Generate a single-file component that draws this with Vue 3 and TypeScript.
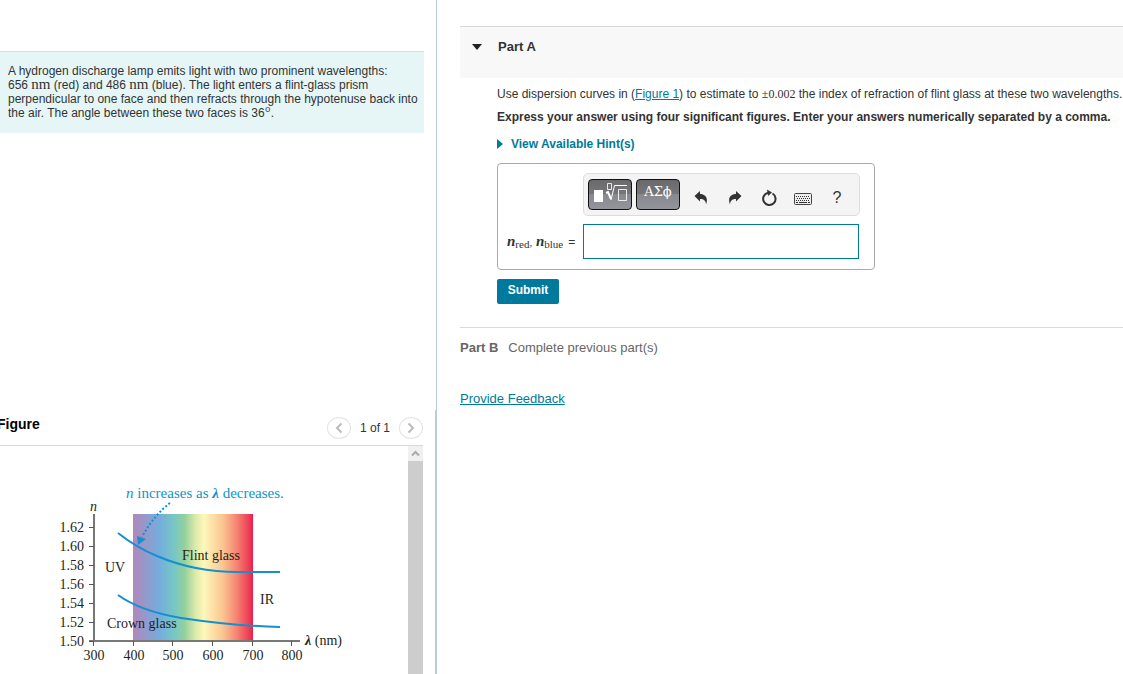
<script setup lang="ts">
import { ref } from 'vue'

const answer = ref('')

interface Tick {
  at: number
  label: string
}

const yTicks: Tick[] = ['1.62', '1.60', '1.58', '1.56', '1.54', '1.52', '1.50'].map(
  (label, i) => ({ label, at: 81 + i * 19 }),
)
const xTicks: Tick[] = [
  { label: '300', at: 93 },
  { label: '400', at: 133 },
  { label: '500', at: 172 },
  { label: '600', at: 212 },
  { label: '700', at: 252 },
  { label: '800', at: 291 },
]
</script>

<template>
  <div class="page">
    <aside class="side">
      <section class="intro">
        <p class="problem">
          A hydrogen discharge lamp emits light with two prominent wavelengths:<br />
          656 <span class="math">nm</span> (red) and 486 <span class="math">nm</span> (blue). The light
          enters a flint-glass prism<br />
          perpendicular to one face and then refracts through the hypotenuse back into<br />
          the air. The angle between these two faces is 36<span class="math">°</span>.
        </p>
      </section>
      <section class="figure">
        <header class="figure-head">
          <h2>Figure</h2>
          <nav class="pager" aria-label="Figures">
            <button type="button" aria-label="Previous figure">
              <svg width="10" height="12" viewBox="0 0 10 12"><path d="M7.500 1.500L3 6l4.500 4.500" /></svg>
            </button>
            <span>1 of 1</span>
            <button type="button" aria-label="Next figure">
              <svg width="10" height="12" viewBox="0 0 10 12"><path d="M2.500 1.500L7 6l-4.500 4.500" /></svg>
            </button>
          </nav>
        </header>
        <div class="figure-body">
          <svg class="plot" width="400" height="228" viewBox="0 0 400 228" role="img" aria-label="Dispersion curves">
            <defs>
              <linearGradient id="spectrum">
                <stop offset="0" stop-color="#b187bb" />
                <stop offset=".1" stop-color="#9698cb" />
                <stop offset=".22" stop-color="#74addd" />
                <stop offset=".35" stop-color="#78c8c2" />
                <stop offset=".43" stop-color="#94d09c" />
                <stop offset=".52" stop-color="#dbe9ab" />
                <stop offset=".59" stop-color="#fef7ba" />
                <stop offset=".75" stop-color="#fbc592" />
                <stop offset=".87" stop-color="#f58070" />
                <stop offset=".97" stop-color="#ef3a55" />
                <stop offset="1" stop-color="#e91e4d" />
              </linearGradient>
            </defs>
            <rect x="133" y="68" width="120" height="127" fill="url(#spectrum)" />
            <path class="axis" d="M94 68V195M89 195H300" />
            <path v-for="t in yTicks" :key="t.label" class="tick" :d="`M89 ${t.at + 0.5}h5`" />
            <path v-for="t in xTicks" :key="t.label" class="tick" :d="`M${t.at + 0.5} 195v5`" />
            <path class="curve" d="M118 87C132 98 142 104 157 110C185 122 210 126 238 126H280" />
            <path class="curve" d="M118 149C136 162 158 168 181 172C214 177 242 180 280 181" />
            <path class="dots" d="M170 57Q154 69 142 91" />
            <path class="head" d="M138 99L137 90L146 93Z" />
            <g class="labels">
              <text v-for="t in yTicks" :key="t.label" x="84" :y="t.at + 5" text-anchor="end">{{ t.label }}</text>
              <text v-for="t in xTicks" :key="t.label" :x="t.at + 1" y="214" text-anchor="middle">{{ t.label }}</text>
              <text x="90" y="65" font-style="italic">n</text>
              <text x="105" y="126">UV</text>
              <text x="260" y="158">IR</text>
              <text x="182" y="114">Flint glass</text>
              <text x="107" y="182">Crown glass</text>
              <text x="305" y="199"><tspan class="lambda">λ</tspan> (nm)</text>
              <text class="note" x="126" y="52"><tspan font-style="italic">n</tspan> increases as <tspan class="lambda">λ</tspan> decreases.</text>
            </g>
          </svg>
          <div class="track">
            <button type="button" aria-label="Scroll up">
              <svg width="9" height="7" viewBox="0 0 9 7"><path d="M1 5.500L4.500 2L8 5.500" /></svg>
            </button>
            <div class="thumb"></div>
          </div>
        </div>
      </section>
    </aside>

    <main class="main">
      <header class="part-head">
        <svg width="10" height="6" viewBox="0 0 10 6"><path d="M0 0H10L5 6Z" fill="#222" /></svg>
        <h1>Part A</h1>
      </header>
      <div class="part-body">
        <p>
          Use dispersion curves in (<a href="#">Figure 1</a>) to estimate to
          <span class="math value">±0.002</span> the index of refraction of flint glass at these two wavelengths.
        </p>
        <p class="strong">
          Express your answer using four significant figures. Enter your answers numerically separated by a comma.
        </p>
        <button type="button" class="hints">
          <svg width="6" height="10" viewBox="0 0 6 10"><path d="M0 0L6 5L0 10Z" fill="#007a9c" /></svg>
          View Available Hint(s)
        </button>
        <form class="answer" @submit.prevent>
          <div class="tools">
            <button type="button" class="dark" aria-label="Templates">
              <svg width="36" height="24" viewBox="0 0 36 24" fill="none" stroke="#fff">
                <rect x="2" y="7" width="9" height="12" fill="#fff" stroke="none" />
                <path d="M15.500 0.500h4v6h-4zM26.500 6.500h8v11h-8z" stroke-opacity=".85" />
                <path d="M14 10l2-1 3 7" stroke-width="2" />
                <path d="M19 17L22.500 2.500H35" />
              </svg>
            </button>
            <button type="button" class="dark greek">ΑΣϕ</button>
            <span class="plain">
              <button type="button" aria-label="Undo">
                <svg width="14" height="14" viewBox="0 0 14 14"><path d="M0.500 5L6 0V3C11.500 3 14.500 7 12 13.500C12 10 10 8 6 8V10.500Z" fill="#333" /></svg>
              </button>
              <button type="button" aria-label="Redo">
                <svg width="14" height="14" viewBox="0 0 14 14"><path d="M13.500 5L8 0V3C2.500 3 -0.500 7 2 13.500C2 10 4 8 8 8V10.500Z" fill="#333" /></svg>
              </button>
              <button type="button" aria-label="Reset">
                <svg width="16" height="18" viewBox="0 0 16 18">
                  <path d="M11.500 4.500A6.200 6.200 0 1 1 7 3.800" fill="none" stroke="#333" stroke-width="2" />
                  <path d="M6 0.500L11 3.500L7 7Z" fill="#333" />
                </svg>
              </button>
              <button type="button" aria-label="Keyboard shortcuts" class="keys">
                <svg width="18" height="12" viewBox="0 0 18 12">
                  <rect x="0.500" y="0.500" width="17" height="11" rx="1" fill="#eee" stroke="#444" />
                  <path d="M2 3.500H16M3 5.500H16M2 7.500H16" stroke="#333" stroke-dasharray="1 1" />
                  <path d="M2 9.500h2M5 9.500h8M14 9.500h2" stroke="#333" />
                </svg>
              </button>
              <button type="button" aria-label="Help" class="help">?</button>
            </span>
          </div>
          <label for="answer-box">
            <i>n</i><sub>red</sub><span class="comma">,</span> <i>n</i><sub>blue</sub><span class="eq">=</span>
          </label>
          <input id="answer-box" v-model="answer" type="text" autocomplete="off" />
        </form>
        <button type="button" class="submit">Submit</button>
      </div>
      <section class="next">
        <strong>Part B</strong>
        <span>Complete previous part(s)</span>
      </section>
      <a class="feedback" href="#">Provide Feedback</a>
    </main>
  </div>
</template>

<style>
body {
  margin: 0;
  background: #fff;
}
</style>

<style scoped>
.page {
  display: flex;
  height: 100vh;
  overflow: hidden;
  font: 12px/14px 'Liberation Sans', Arial, sans-serif;
  color: #333;
}
* {
  box-sizing: border-box;
}
h1,
h2,
p {
  margin: 0;
}
button {
  padding: 0;
  border: 0;
  background: none;
  font: inherit;
  color: inherit;
  display: flex;
  align-items: center;
  justify-content: center;
}
a {
  color: #007a9c;
}
.math {
  font-family: 'Liberation Serif', serif;
  font-size: 15px;
  line-height: 0;
}
.value {
  font-size: 12px;
}
.side {
  flex: 0 0 437px;
  display: grid;
  grid-template-columns: minmax(0, 1fr);
  grid-template-rows: 410px 1fr;
}
.intro {
  padding: 51px 12px 0 0;
  border-right: 1px solid #b8cbe0;
}
.problem {
  padding: 12px 0 13px 8px;
  border-top: 1px solid #d6e2e2;
  background: #e6f6f6;
  white-space: nowrap;
}
.figure {
  min-height: 0;
  display: flex;
  flex-direction: column;
  padding-right: 12px;
  border-right: 2px solid #b8cbe0;
}
.figure-head {
  flex: 0 0 36px;
  display: flex;
  justify-content: space-between;
  border-bottom: 1px solid #d9d9d9;
}
.figure-head h2 {
  margin-left: -3px;
  font-size: 14px;
  line-height: 28px;
  color: #000;
}
.pager {
  display: flex;
  align-items: center;
  gap: 9px;
}
.pager button {
  width: 24px;
  height: 22px;
  border: 1px solid #e3e3e3;
  border-radius: 50%;
}
.pager path {
  fill: none;
  stroke: #bbb;
  stroke-width: 2;
}
.figure-body {
  flex: 1;
  min-height: 0;
  display: flex;
  justify-content: space-between;
  overflow: hidden;
}
.plot {
  display: block;
}
.axis {
  fill: none;
  stroke: #777;
  stroke-width: 2;
}
.tick {
  stroke: #555;
}
.curve {
  fill: none;
  stroke: #1490cf;
  stroke-width: 2;
}
.dots {
  fill: none;
  stroke: #1490cf;
  stroke-width: 2;
  stroke-dasharray: 2 2;
}
.head {
  fill: #1490cf;
}
.labels {
  font-family: 'Liberation Serif', serif;
  font-size: 14px;
  fill: #231f20;
}
.note {
  font-size: 15px;
  fill: #0d95cb;
}
.lambda {
  font-style: italic;
  font-weight: bold;
}
.track {
  width: 15px;
  display: flex;
  flex-direction: column;
  background: #f0f0f0;
}
.track button {
  height: 15px;
}
.track path {
  fill: none;
  stroke: #aaa;
  stroke-width: 2;
}
.thumb {
  flex: 1;
  background: #cdcdcd;
}
.main {
  flex: 1;
  min-width: 0;
  padding: 26px 0 0 23px;
}
.part-head {
  display: flex;
  gap: 16px;
  height: 52px;
  padding: 12px;
  border-top: 1px solid #d9d9d9;
  background: #f8f8f8;
}
.part-head svg {
  margin-top: 5px;
}
.part-head h1 {
  font-size: 13px;
  line-height: 16px;
}
.part-body {
  padding: 9px 0 23px 37px;
  border-bottom: 1px solid #d9d9d9;
  white-space: nowrap;
}
.part-body p {
  margin-bottom: 9px;
}
.strong {
  font-weight: bold;
}
.hints {
  gap: 8px;
  margin-top: 13px;
  margin-bottom: 12px;
  font-weight: bold;
  color: #007a9c;
}
.answer {
  display: grid;
  grid-template-columns: 76px 277px;
  row-gap: 8px;
  width: 378px;
  padding: 9px 9px 10px;
  border: 1px solid #aaa;
  border-radius: 4px;
}
.tools {
  grid-column: 2;
  display: flex;
  align-items: center;
  gap: 4px;
  height: 43px;
  padding: 0 4px;
  border: 1px solid #ddd;
  border-radius: 5px;
  background: #f4f4f4;
}
.dark {
  width: 44px;
  height: 31px;
  border: 1px solid #111;
  border-radius: 4px;
  background: linear-gradient(#6a6a6c, #77777b 50%, #88888f 50%, #94949c);
  color: #fff;
}
.greek {
  padding-bottom: 6px;
  font-family: 'DejaVu Serif', 'Liberation Serif', serif;
  font-size: 13px;
}
.plain {
  display: flex;
  padding-top: 6px;
}
.plain button {
  width: 34px;
  height: 20px;
}
.plain .keys {
  padding-top: 2px;
}
.plain .help {
  font-size: 16px;
}
.answer label {
  align-self: center;
  font-family: 'Liberation Serif', serif;
  font-size: 15px;
}
.answer i {
  font-weight: bold;
}
.answer sub {
  font-size: 11px;
  line-height: 0;
  vertical-align: -2px;
}
.comma {
  font-size: 11px;
}
.eq {
  margin-left: 5px;
  font-family: 'Liberation Sans', sans-serif;
  font-size: 12px;
}
.answer input {
  width: 276px;
  height: 35px;
  padding: 0 6px;
  border: 1px solid #007a9c;
  background: #fff;
  font: inherit;
}
.submit {
  width: 62px;
  height: 25px;
  margin-top: 9px;
  padding-bottom: 4px;
  border-radius: 2px;
  background: #007a9c;
  color: #fff;
  font-weight: bold;
}
.next {
  display: flex;
  gap: 10px;
  padding-top: 12px;
  font-size: 13px;
  line-height: 16px;
  color: #666;
}
.feedback {
  display: inline-block;
  margin-top: 35px;
  font-size: 13px;
  line-height: 16px;
}
</style>
